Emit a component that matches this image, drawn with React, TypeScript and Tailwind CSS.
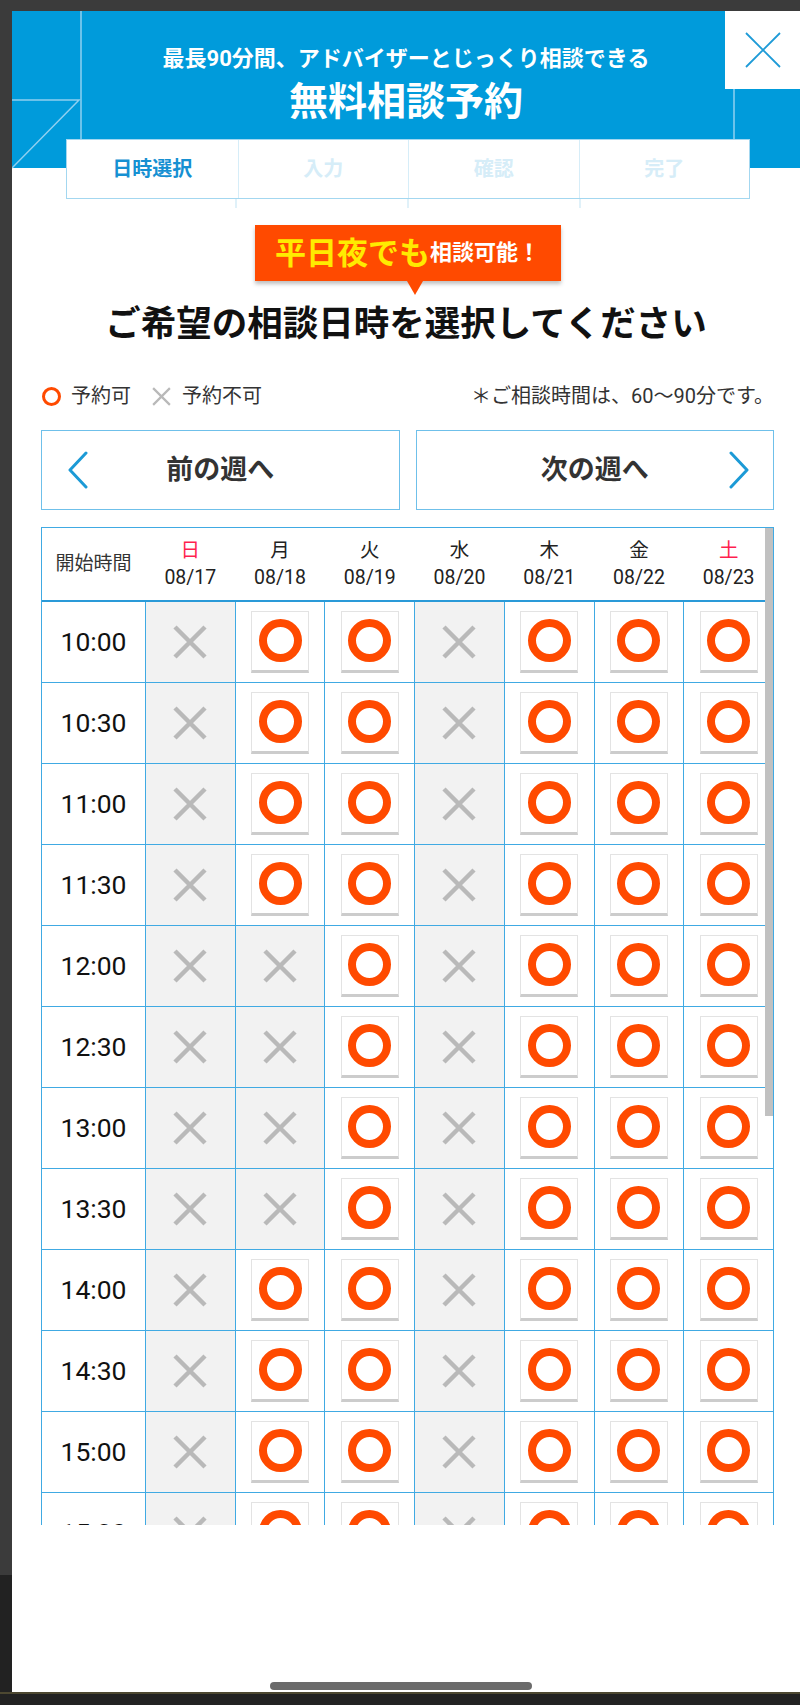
const font = "font-['Roboto','Noto_Sans_CJK_JP',sans-serif]"

const days = [
  { label: '日', date: '08/17', red: true },
  { label: '月', date: '08/18', red: false },
  { label: '火', date: '08/19', red: false },
  { label: '水', date: '08/20', red: false },
  { label: '木', date: '08/21', red: false },
  { label: '金', date: '08/22', red: false },
  { label: '土', date: '08/23', red: true },
]

// o = 予約可, x = 予約不可 (日〜土)
const slots: [string, string][] = [
  ['10:00', 'xooxooo'],
  ['10:30', 'xooxooo'],
  ['11:00', 'xooxooo'],
  ['11:30', 'xooxooo'],
  ['12:00', 'xxoxooo'],
  ['12:30', 'xxoxooo'],
  ['13:00', 'xxoxooo'],
  ['13:30', 'xxoxooo'],
  ['14:00', 'xooxooo'],
  ['14:30', 'xooxooo'],
  ['15:00', 'xooxooo'],
  ['15:30', 'xooxooo'],
  ['16:00', 'xooxooo'],
  ['16:30', 'xooxooo'],
]

const Cross = ({ size, stroke }: { size: number; stroke: number }) => (
  <svg width={size} height={size} viewBox="0 0 34 34" fill="none">
    <path d="M2 2L32 32M32 2L2 32" stroke="#b9b9b9" strokeWidth={stroke} />
  </svg>
)

const Chevron = ({ dir }: { dir: 'left' | 'right' }) => (
  <svg width="22" height="38" viewBox="0 0 22 38" fill="none">
    <path
      d={dir === 'left' ? 'M19 2L3 19L19 36' : 'M3 2L19 19L3 36'}
      stroke="#1c9ad6"
      strokeWidth="3"
      strokeLinecap="round"
      strokeLinejoin="round"
    />
  </svg>
)

const SlotCell = ({ open }: { open: boolean }) => {
  if (!open) {
    return (
      <div className="flex items-center justify-center bg-[#f2f2f2]">
        <Cross size={34} stroke={4.5} />
      </div>
    )
  }
  return (
    <div className="flex items-center justify-center bg-white">
      <button
        type="button"
        className="flex h-[62px] w-[58px] items-center justify-center border border-b-[3px] border-[#e3e3e3] border-b-[#cccccc] bg-white pb-[1px]"
      >
        <span className="block h-[43px] w-[43px] rounded-full border-[8px] border-[#ff4a00]" />
      </button>
    </div>
  )
}

const HeaderDecoration = () => (
  <svg className="pointer-events-none absolute left-0 top-0" width="788" height="200" fill="none">
    <path d="M69 0V128" stroke="#8fd0f0" strokeWidth="1.5" />
    <path d="M0 89H67L0 157" stroke="#8fd0f0" strokeWidth="1.5" />
    <path d="M722 78V128" stroke="#8fd0f0" strokeWidth="1.5" />
    <path d="M224 188V197M396 188V197M568 188V197" stroke="#d6edf8" strokeWidth="1.5" />
  </svg>
)

export default function App() {
  return (
    <div
      className={`${font} relative h-[1705px] w-[800px] overflow-hidden bg-[linear-gradient(to_bottom,#3b3b3b_1575px,#222222_1575px)]`}
    >
      <div className="ml-[12px] mt-[11px] flex h-[1681px] w-[788px] flex-col bg-white">
        {/* header */}
        <div className="relative">
          <div className="flex h-[157px] flex-col items-center bg-[#009bdb] pt-[33px] text-white">
            <p className="text-[22px] font-bold leading-[30px]">最長90分間、アドバイザーとじっくり相談できる</p>
            <p className="mt-[3px] text-[39px] font-bold leading-[50px]">無料相談予約</p>
          </div>
          <div className="relative z-10 -mt-[29px] ml-[54px] grid h-[60px] w-[684px] grid-cols-4 border-[1.5px] border-[#a3d7f0] bg-white text-[20px] font-bold">
            <div className="flex items-center justify-center text-[#1690d2]">日時選択</div>
            <div className="flex items-center justify-center border-l-[1.5px] border-[#d6edf8] text-[#d6edf8]">入力</div>
            <div className="flex items-center justify-center border-l-[1.5px] border-[#d6edf8] text-[#d6edf8]">確認</div>
            <div className="flex items-center justify-center border-l-[1.5px] border-[#d6edf8] text-[#d6edf8]">完了</div>
          </div>
          <HeaderDecoration />
          <button
            type="button"
            className="absolute right-0 top-0 z-20 flex h-[78px] w-[75px] items-center justify-center bg-white"
          >
            <svg width="36" height="36" viewBox="0 0 36 36" fill="none">
              <path d="M1 1L35 35M35 1L1 35" stroke="#1e9bd7" strokeWidth="1.8" />
            </svg>
          </button>
        </div>

        {/* badge */}
        <div className="mt-[26px] flex justify-center">
          <div className="relative ml-[3px] flex h-[56px] w-[306px] items-center justify-center bg-[#ff4a00] shadow-[0_3px_4px_rgba(0,0,0,0.25)]">
            <span className="text-[31px] font-bold leading-none text-[#ffeb00]">平日夜でも</span>
            <span className="text-[22px] font-bold leading-none text-white">相談可能！</span>
            <span className="absolute left-[152px] top-full h-0 w-0 border-x-[8px] border-t-[14px] border-x-transparent border-t-[#ff4a00]" />
          </div>
        </div>

        <h1 className="mt-[19px] flex h-[50px] items-center justify-center text-[35.5px] font-bold text-[#111]">
          ご希望の相談日時を選択してください
        </h1>

        <div className="ml-[29px] w-[733px]">
          {/* legend */}
          <div className="mt-[32px] flex h-[28px] items-center text-[20px] text-[#333]">
            <span className="ml-[1px] block h-[19px] w-[19px] rounded-full border-[3.5px] border-[#ff4a00]" />
            <span className="ml-[10px]">予約可</span>
            <span className="ml-[21px]">
              <Cross size={19} stroke={4} />
            </span>
            <span className="ml-[11px]">予約不可</span>
            <span className="ml-auto">＊ご相談時間は、60〜90分です。</span>
          </div>

          {/* week nav */}
          <div className="mt-[20px] grid grid-cols-2 gap-[16px]">
            <button
              type="button"
              className="relative flex h-[80px] items-center justify-center border-[1.5px] border-[#6fc0ea] text-[27px] font-bold text-[#333]"
            >
              <span className="absolute left-[25px] top-[20px]">
                <Chevron dir="left" />
              </span>
              前の週へ
            </button>
            <button
              type="button"
              className="relative flex h-[80px] items-center justify-center border-[1.5px] border-[#6fc0ea] text-[27px] font-bold text-[#333]"
            >
              次の週へ
              <span className="absolute right-[23px] top-[20px]">
                <Chevron dir="right" />
              </span>
            </button>
          </div>

          {/* calendar */}
          <div className="relative mt-[17px] h-[998px] overflow-hidden border-x border-t border-[#40aae3]">
            <div className="grid h-[74px] grid-cols-[103px_repeat(7,1fr)] gap-x-px border-b-2 border-[#2a9ad8]">
              <div className="flex items-center justify-center text-[19px] text-[#333]">開始時間</div>
              {days.map((d) => (
                <div key={d.date} className="flex flex-col items-center justify-center text-[19.5px] leading-[27px]">
                  <span className={d.red ? 'text-[#ff1f4f]' : 'text-[#222]'}>{d.label}</span>
                  <span className="text-[#222]">{d.date}</span>
                </div>
              ))}
            </div>
            <div className="grid auto-rows-[80px] grid-cols-[103px_repeat(7,1fr)] gap-px bg-[#40aae3]">
              {slots.map(([time, pattern]) => (
                <div key={time} className="contents">
                  <div className="flex items-center justify-center bg-white text-[26.5px] text-[#111]">{time}</div>
                  {pattern.split('').map((c, i) => (
                    <SlotCell key={i} open={c === 'o'} />
                  ))}
                </div>
              ))}
            </div>
            <div className="absolute right-0 top-0 h-[588px] w-[8px] bg-[#c1c1c1]" />
          </div>
        </div>

        <div className="ml-[258px] mt-[157px] h-[8px] w-[262px] rounded-full bg-[#6b6b6b]" />
      </div>
      <div className="h-[2px] w-full bg-[#4d4831]" />
    </div>
  )
}
